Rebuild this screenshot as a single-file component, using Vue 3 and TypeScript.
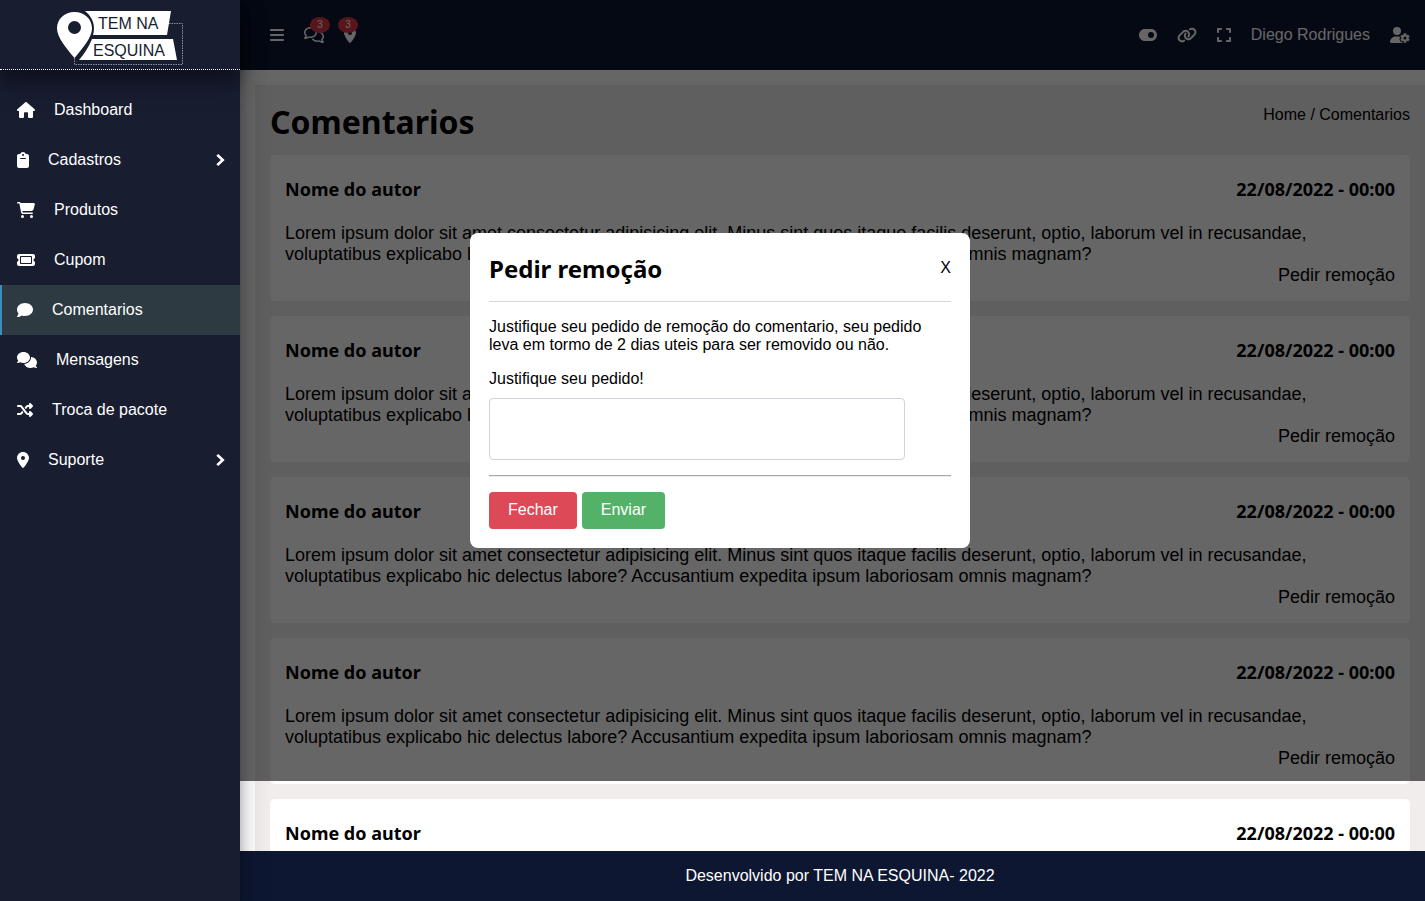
<script setup lang="ts">
import { ref } from 'vue'

interface Glyph {
  w: number
  d: string
}

interface MenuItem {
  label: string
  icon: string
  active?: boolean
  expandable?: boolean
}

const glyphs: Record<string, Glyph> = {
  home: { w: 576, d: 'M575.8 255.5c0 18-15 32.1-32 32.1h-32l.7 160.2c0 2.7-.2 5.4-.5 8.1V472c0 22.1-17.9 40-40 40H392c-22.100 0-40-17.900-40-40V360c0-17.700-14.300-32-32-32h-64c-17.700 0-32 14.300-32 32v112c0 22.100-17.900 40-40 40h-80c-22.100 0-40-17.900-40-40V287.600H32c-18 0-32-14-32-32.100 0-9 3-17 10-24L266.400 8c7-7 15-8 22-8s15 2 21 7l255.400 224.500c8 7 12 15 11 24z' },
  clipboard: { w: 384, d: 'M192 0c-41.800 0-77.400 26.700-90.500 64H64C28.700 64 0 92.700 0 128v320c0 35.300 28.700 64 64 64h256c35.300 0 64-28.700 64-64V128c0-35.300-28.700-64-64-64h-37.500C269.400 26.700 233.800 0 192 0zm0 64a32 32 0 1 1 0 64 32 32 0 1 1 0-64zM112 192h160c8.800 0 16 7.200 16 16s-7.200 16-16 16H112c-8.800 0-16-7.200-16-16s7.200-16 16-16z' },
  cart: { w: 576, d: 'M0 24C0 10.700 10.700 0 24 0h45.500c22 0 41.500 12.800 50.600 32h411c26.300 0 45.500 25 38.600 50.400l-41 152.300c-8.500 31.400-37 53.300-69.500 53.300H170.700l5.400 28.500c2.200 11.300 12.100 19.500 23.600 19.500H488c13.300 0 24 10.700 24 24s-10.700 24-24 24H199.700c-34.600 0-64.300-24.600-70.700-58.500L77.400 54.500c-.7-3.800-4-6.500-7.900-6.500H24C10.700 48 0 37.300 0 24zm128 440a48 48 0 1 1 96 0 48 48 0 1 1-96 0zm336-48a48 48 0 1 1 0 96 48 48 0 1 1 0-96z' },
  ticket: { w: 576, d: 'M64 64C28.700 64 0 92.700 0 128v64c0 8.800 7.400 15.700 15.700 18.600C34.500 217.100 48 235 48 256s-13.500 38.900-32.300 45.400C7.400 304.300 0 311.200 0 320v64c0 35.300 28.700 64 64 64h448c35.300 0 64-28.700 64-64v-64c0-8.800-7.400-15.700-15.700-18.600C541.500 294.900 528 277 528 256s13.500-38.900 32.300-45.400c8.300-2.900 15.700-9.800 15.700-18.600v-64c0-35.300-28.700-64-64-64H64zm64 112v160c0 8.800 7.200 16 16 16h288c8.800 0 16-7.200 16-16V176c0-8.800-7.200-16-16-16H144c-8.800 0-16 7.200-16 16zM96 160c0-17.700 14.300-32 32-32h320c17.700 0 32 14.300 32 32v192c0 17.700-14.300 32-32 32H128c-17.700 0-32-14.300-32-32V160z' },
  comment: { w: 512, d: 'M512 240c0 114.900-114.600 208-256 208-37.100 0-72.300-6.400-104.100-17.900-11.900 8.700-31.300 20.600-54.300 30.600C73.600 471.100 44.700 480 16 480c-6.500 0-12.300-3.900-14.800-9.900s-1.100-12.800 3.400-17.400l.3-.3c.3-.3.7-.7 1.300-1.400 1.100-1.200 2.800-3.100 4.900-5.700 4.100-5 9.600-12.400 15.200-21.600 10-16.600 19.500-38.400 21.400-62.900C17.700 326.800 0 285.100 0 240 0 125.100 114.600 32 256 32s256 93.100 256 208z' },
  comments: { w: 640, d: 'M208 352c114.900 0 208-78.800 208-176S322.900 0 208 0 0 78.800 0 176c0 38.600 14.700 74.300 39.600 103.400-3.500 9.400-8.700 17.700-14.200 24.700-4.800 6.200-9.700 11-13.300 14.300-1.800 1.600-3.300 2.900-4.300 3.700-.5.400-.9.700-1.100.8l-.2.200C1 327.200-1.400 334.400.8 340.900S9.100 352 16 352c21.800 0 43.800-5.600 62.100-12.500 9.200-3.500 17.800-7.400 25.200-11.400C134.100 343.300 169.800 352 208 352zM448 176c0 112.300-99.100 196.900-216.500 207C255.800 457.400 336.400 512 432 512c38.200 0 73.900-8.700 104.700-23.900 7.500 4 16 7.900 25.200 11.400 18.300 6.900 40.300 12.500 62.100 12.500 6.900 0 13.100-4.500 15.200-11.100 2.100-6.600-.2-13.800-5.800-17.900l-.2-.2c-.2-.2-.6-.4-1.100-.8-1-.8-2.500-2-4.300-3.700-3.600-3.300-8.500-8.100-13.300-14.300-5.500-7-10.700-15.400-14.200-24.700 24.900-29 39.600-64.700 39.600-103.400 0-92.800-84.900-168.900-192.600-175.500.4 5.100.6 10.300.6 15.500z' },
  shuffle: { w: 512, d: 'M403.800 34.400c12-5 25.700-2.200 34.900 6.900l64 64c6 6 9.400 14.100 9.400 22.600s-3.400 16.600-9.400 22.600l-64 64c-9.200 9.200-22.900 11.900-34.900 6.900S384 204.900 384 192v-32h-32c-10.100 0-19.600 4.700-25.600 12.800L284 229.300 244 176l31.200-41.600C293.300 110.200 321.800 96 352 96h32V64c0-12.900 7.800-24.600 19.800-29.600zM164 282.700l40 53.300-31.200 41.600C154.700 401.800 126.200 416 96 416H32c-17.700 0-32-14.300-32-32s14.300-32 32-32h64c10.100 0 19.600-4.700 25.600-12.800L164 282.700zm274.600 188c-9.200 9.200-22.900 11.900-34.900 6.900S384 460.900 384 448v-32h-32c-30.200 0-58.700-14.200-76.800-38.400L121.600 172.800c-6-8.100-15.500-12.800-25.600-12.800H32c-17.700 0-32-14.300-32-32s14.300-32 32-32h64c30.200 0 58.700 14.200 76.800 38.400l153.600 204.800c6 8.100 15.500 12.800 25.600 12.800h32v-32c0-12.900 7.800-24.600 19.800-29.600s25.700-2.200 34.900 6.900l64 64c6 6 9.400 14.100 9.400 22.600s-3.400 16.600-9.400 22.600l-64 64z' },
  pin: { w: 384, d: 'M215.700 499.200C267 435 384 279.400 384 192 384 86 298 0 192 0S0 86 0 192c0 87.400 117 243 168.300 307.200 12.300 15.300 35.100 15.300 47.400 0zM192 128a64 64 0 1 1 0 128 64 64 0 1 1 0-128z' },
  chevron: { w: 320, d: 'M104 64L310 256L104 448L42 390L186 256L42 122Z' },
  bars: { w: 448, d: 'M0 96c0-17.700 14.300-32 32-32h384c17.700 0 32 14.300 32 32s-14.300 32-32 32H32C14.300 128 0 113.700 0 96zm0 160c0-17.700 14.300-32 32-32h384c17.700 0 32 14.300 32 32s-14.300 32-32 32H32c-17.700 0-32-14.300-32-32zm448 160c0 17.700-14.300 32-32 32H32c-17.700 0-32-14.300-32-32s14.300-32 32-32h384c17.700 0 32 14.300 32 32z' },
  chats: { w: 640, d: 'M88.200 309.100c9.800-18.300 6.800-40.800-7.500-55.800C59.400 230.900 48 204 48 176c0-63.500 63.800-128 160-128s160 64.500 160 128-63.800 128-160 128c-13.100 0-25.800-1.300-37.800-3.600-10.400-2-21.200-.6-30.700 4.200-4.100 2.100-8.300 4.100-12.600 6-16 7.200-32.900 13.500-49.900 18 2.800-4.600 5.400-9.100 7.900-13.600l3.300-5.900zM0 176c0 41.800 17.200 80.100 45.900 110.300-.9 1.700-1.900 3.500-2.800 5.100-10.300 18.400-22.300 36.500-36.600 52.100-6.600 7-8.300 17.200-4.600 25.900C5.800 378.300 14.400 384 24 384c43 0 86.500-13.300 122.700-29.700 4.800-2.200 9.600-4.500 14.200-6.800 15.100 3 30.900 4.500 47.100 4.500 114.900 0 208-78.800 208-176S322.900 0 208 0 0 78.800 0 176zm432 304c16.200 0 31.900-1.600 47.100-4.500 4.600 2.300 9.400 4.600 14.200 6.800C529.500 498.700 573 512 616 512c9.600 0 18.200-5.700 22-14.500 3.800-8.800 2-19-4.600-25.900-14.200-15.600-26.200-33.700-36.600-52.100-.9-1.700-1.900-3.400-2.800-5.100C622.800 384.100 640 345.800 640 304c0-94.400-87.900-171.500-198.200-175.800 4.100 15.200 6.200 31.200 6.200 47.800v.6c87.200 6.700 144 67.500 144 127.400 0 28-11.400 54.900-32.700 77.200-14.300 15-17.300 37.600-7.500 55.800 1.100 2 2.200 4 3.300 5.900 2.500 4.500 5.200 9 7.900 13.600-17-4.500-33.900-10.700-49.900-18-4.300-1.900-8.500-3.900-12.600-6-9.500-4.800-20.300-6.200-30.700-4.200-12.100 2.400-24.700 3.600-37.800 3.600-61.700 0-110-26.500-136.800-62.300-16 5.400-32.800 9.400-50 11.800C279 439.800 350 480 432 480z' },
  toggle: { w: 576, d: 'M192 64C86 64 0 150 0 256s86 192 192 192h192c106 0 192-86 192-192S490 64 384 64H192zm192 96a96 96 0 1 1 0 192 96 96 0 1 1 0-192z' },
  link: { w: 640, d: 'M579.800 267.700c56.500-56.500 56.500-148 0-204.500-50-50-128.800-56.500-186.300-15.400l-1.600 1.100c-14.400 10.300-17.700 30.300-7.400 44.600s30.300 17.700 44.600 7.400l1.600-1.100c32.100-22.900 76-19.300 103.800 8.600 31.500 31.500 31.500 82.500 0 114L422.300 334.800c-31.500 31.500-82.500 31.500-114 0-27.900-27.900-31.500-71.800-8.600-103.800l1.100-1.600c10.300-14.400 6.900-34.400-7.400-44.600s-34.400-6.900-44.600 7.400l-1.100 1.600C206.500 251.200 213 330 263 380c56.500 56.500 148 56.500 204.500 0L579.800 267.700zM60.200 244.300c-56.500 56.500-56.500 148 0 204.500 50 50 128.800 56.500 186.300 15.400l1.600-1.100c14.400-10.300 17.700-30.300 7.400-44.600s-30.300-17.700-44.600-7.400l-1.600 1.100c-32.100 22.900-76 19.300-103.800-8.600C74 372 74 321 105.500 289.500l112.200-112.300c31.500-31.500 82.500-31.500 114 0 27.900 27.900 31.500 71.800 8.600 103.900l-1.100 1.600c-10.300 14.400-6.900 34.400 7.400 44.600s34.400 6.900 44.600-7.400l1.100-1.600C433.500 260.800 427 182 377 132c-56.500-56.500-148-56.500-204.500 0L60.200 244.300z' },
  expand: { w: 448, d: 'M32 32C14.300 32 0 46.300 0 64v96c0 17.700 14.300 32 32 32s32-14.300 32-32V96h64c17.700 0 32-14.300 32-32s-14.300-32-32-32H32zM64 352c0-17.700-14.300-32-32-32s-32 14.300-32 32v96c0 17.700 14.300 32 32 32h96c17.700 0 32-14.300 32-32s-14.300-32-32-32H64v-64zM320 32c-17.700 0-32 14.300-32 32s14.300 32 32 32h64v64c0 17.700 14.300 32 32 32s32-14.300 32-32V64c0-17.700-14.300-32-32-32h-96zM448 352c0-17.700-14.300-32-32-32s-32 14.300-32 32v64h-64c-17.700 0-32 14.300-32 32s14.300 32 32 32h96c17.700 0 32-14.300 32-32v-96z' },
  userGear: { w: 640, d: 'M224 0a128 128 0 1 1 0 256 128 128 0 1 1 0-256zM178.300 304h91.400c11.800 0 23.400 1.200 34.500 3.300-2.100 18.500 7.400 35.600 21.800 44.800-16.600 10.600-26.700 31.600-20 53.300 4 12.900 9.400 25.500 16.400 37.600s15.200 23.100 24.400 33c15.700 16.900 39.600 18.400 57.200 8.700v.9c0 9.200 2.700 18.500 7.900 26.300H29.700C13.300 512 0 498.700 0 482.300 0 383.800 79.800 304 178.300 304zM436 218.200c0-7 4.500-13.300 11.300-14.800 10.500-2.400 21.500-3.700 32.700-3.700s22.200 1.300 32.700 3.700c6.800 1.500 11.300 7.800 11.300 14.800v30.600c7.900 3.400 15.400 7.700 22.300 12.800l24.900-14.300c6.100-3.500 13.700-2.700 18.500 2.400 7.600 8.100 14.300 17.200 20.100 27.200s10.300 20.400 13.500 31c2.100 6.700-1.100 13.700-7.200 17.200l-25 14.400c.4 4 .7 8.100.7 12.300s-.2 8.200-.7 12.300l25 14.400c6.100 3.500 9.200 10.500 7.200 17.200-3.300 10.600-7.800 21-13.500 31s-12.500 19.100-20.100 27.200c-4.800 5.100-12.500 5.900-18.500 2.400l-24.900-14.300c-6.900 5.100-14.300 9.400-22.300 12.800v30.600c0 7-4.500 13.300-11.300 14.800-10.500 2.400-21.500 3.700-32.700 3.700s-22.200-1.300-32.700-3.700c-6.800-1.500-11.300-7.800-11.300-14.800v-30.500c-8-3.400-15.600-7.700-22.500-12.900l-24.700 14.300c-6.100 3.500-13.700 2.700-18.500-2.400-7.600-8.100-14.300-17.200-20.100-27.200s-10.300-20.400-13.500-31c-2.100-6.700 1.100-13.700 7.200-17.200l24.800-14.300c-.4-4.100-.7-8.200-.7-12.400s.2-8.300.7-12.400l-24.800-14.300c-6.100-3.500-9.200-10.500-7.200-17.200 3.300-10.600 7.700-21 13.500-31s12.500-19.100 20.100-27.200c4.800-5.100 12.400-5.900 18.500-2.400l24.800 14.300c6.900-5.100 14.500-9.400 22.500-12.900v-30.500zM480 303.800a48 48 0 1 0 0 96 48 48 0 1 0 0-96z' },
}

const menu: MenuItem[] = [
  { label: 'Dashboard', icon: 'home' },
  { label: 'Cadastros', icon: 'clipboard', expandable: true },
  { label: 'Produtos', icon: 'cart' },
  { label: 'Cupom', icon: 'ticket' },
  { label: 'Comentarios', icon: 'comment', active: true },
  { label: 'Mensagens', icon: 'comments' },
  { label: 'Troca de pacote', icon: 'shuffle' },
  { label: 'Suporte', icon: 'pin', expandable: true },
]

const lorem =
  'Lorem ipsum dolor sit amet consectetur adipisicing elit. Minus sint quos itaque facilis deserunt, optio, laborum vel in recusandae, voluptatibus explicabo hic delectus labore? Accusantium expedita ipsum laboriosam omnis magnam?'

const comments = Array.from({ length: 5 }, (_, id) => ({
  id,
  author: 'Nome do autor',
  date: '22/08/2022 - 00:00',
  text: lorem,
}))

const modalOpen = ref(true)
const reason = ref('')

const box = (name: string): string => `0 0 ${glyphs[name].w} 512`
</script>

<template>
  <div class="layout">
    <aside class="sidebar">
      <a class="brand" href="#" aria-label="Tem na Esquina">
        <svg class="logo" viewBox="0 0 126 56" aria-hidden="true">
          <path d="M112 14.500H125.500V55.500H17.500V46" fill="none" stroke="#8d92a3" stroke-dasharray="1.500 1" />
          <path d="M28 2H114L110 26H36Q40 12 28 2Z" fill="#fff" />
          <path d="M35 30H116L120 51H22Q30 42 35 30Z" fill="#fff" />
          <path fill-rule="evenodd" d="M17.500 3C27.500 3 35 10 35 19.500C35 28 26 39 17.500 49C9 39 0 28 0 19.500C0 10 7.500 3 17.500 3ZM17.500 12A6.500 6.500 0 1 0 17.500 25A6.500 6.500 0 1 0 17.500 12Z" fill="#fff" />
          <text x="41" y="20" class="logo-text">TEM NA</text>
          <text x="36" y="47" class="logo-text">ESQUINA</text>
        </svg>
      </a>
      <nav class="menu">
        <a v-for="item in menu" :key="item.label" href="#" class="menu-item" :class="{ active: item.active }">
          <svg class="icon" :viewBox="box(item.icon)" aria-hidden="true"><path fill-rule="evenodd" :d="glyphs[item.icon].d" /></svg>
          <span class="menu-label">{{ item.label }}</span>
          <svg v-if="item.expandable" class="icon" :viewBox="box('chevron')" aria-hidden="true"><path :d="glyphs.chevron.d" /></svg>
        </a>
      </nav>
    </aside>

    <div class="page">
      <header class="topbar">
        <div class="tools">
          <button type="button" class="tool" aria-label="Menu">
            <svg class="icon" :viewBox="box('bars')"><path :d="glyphs.bars.d" /></svg>
          </button>
          <button type="button" class="tool" aria-label="Mensagens">
            <svg class="icon" :viewBox="box('chats')"><path :d="glyphs.chats.d" /></svg>
            <span class="badge">3</span>
          </button>
          <button type="button" class="tool" aria-label="Suporte">
            <svg class="icon" :viewBox="box('pin')"><path fill-rule="evenodd" :d="glyphs.pin.d" /></svg>
            <span class="badge">3</span>
          </button>
        </div>
        <div class="tools">
          <button type="button" class="tool" aria-label="Alternar tema">
            <svg class="icon" :viewBox="box('toggle')"><path fill-rule="evenodd" :d="glyphs.toggle.d" /></svg>
          </button>
          <button type="button" class="tool" aria-label="Link">
            <svg class="icon" :viewBox="box('link')"><path :d="glyphs.link.d" /></svg>
          </button>
          <button type="button" class="tool" aria-label="Tela cheia">
            <svg class="icon" :viewBox="box('expand')"><path :d="glyphs.expand.d" /></svg>
          </button>
          <span>Diego Rodrigues</span>
          <button type="button" class="tool" aria-label="Conta">
            <svg class="icon" :viewBox="box('userGear')"><path fill-rule="evenodd" :d="glyphs.userGear.d" /></svg>
          </button>
        </div>
      </header>

      <main class="scroller">
        <div class="content">
          <div class="heading">
            <h1>Comentarios</h1>
            <div class="crumbs"><a href="#">Home</a> / <a href="#">Comentarios</a></div>
          </div>
          <article v-for="c in comments" :key="c.id" class="card">
            <div class="card-head">
              <h3>{{ c.author }}</h3>
              <h3>{{ c.date }}</h3>
            </div>
            <p>{{ c.text }}</p>
            <button type="button" class="remove" @click="modalOpen = true">Pedir remoção</button>
          </article>
        </div>
      </main>

      <footer class="footer">Desenvolvido por TEM NA ESQUINA- 2022</footer>
    </div>

    <div v-if="modalOpen" class="overlay">
      <form class="modal" role="dialog" aria-labelledby="modal-title" @submit.prevent="modalOpen = false">
        <div class="modal-head">
          <h2 id="modal-title">Pedir remoção</h2>
          <button type="button" class="close" @click="modalOpen = false">X</button>
        </div>
        <p class="modal-text">
          Justifique seu pedido de remoção do comentario, seu pedido leva em tormo de 2 dias uteis para ser removido ou não.
        </p>
        <label for="reason">Justifique seu pedido!</label>
        <textarea id="reason" v-model="reason"></textarea>
        <hr />
        <div class="actions">
          <button type="button" class="btn danger" @click="modalOpen = false">Fechar</button>
          <button type="submit" class="btn success">Enviar</button>
        </div>
      </form>
    </div>
  </div>
</template>

<style>
body {
  margin: 0;
  background: #fff;
}
</style>

<style scoped>
* {
  box-sizing: border-box;
}

.layout {
  position: relative;
  display: grid;
  grid-template-columns: 240px minmax(0, 1fr);
  height: 100vh;
  overflow: hidden;
  font: 16px/18px "Liberation Sans", Arial, sans-serif;
  color: #000;
}

a {
  color: inherit;
  text-decoration: none;
}

button {
  padding: 0;
  border: 0;
  background: none;
  color: inherit;
  font: inherit;
  cursor: pointer;
}

h1,
h2,
h3,
p {
  margin: 0;
}

h1,
h2,
h3 {
  font-family: "Noto Sans", "Open Sans", sans-serif;
  font-weight: 700;
}

.icon {
  display: block;
  height: 16px;
  fill: currentColor;
}

/* Sidebar */
.sidebar {
  position: relative;
  z-index: 3;
  background: #181d30;
  color: #fff;
  box-shadow: 0 14px 28px rgba(0, 0, 0, 0.25), 0 10px 10px rgba(0, 0, 0, 0.22);
}

.brand {
  display: flex;
  justify-content: center;
  height: 70px;
  padding-top: 9px;
  border-bottom: 1px dotted #fff;
  box-shadow: 0 14px 28px rgba(0, 0, 0, 0.25), 0 10px 10px rgba(0, 0, 0, 0.22);
}

.logo {
  width: 126px;
  height: 56px;
}

.logo-text {
  font-size: 16px;
  fill: #181d30;
}

.menu {
  padding-top: 15px;
}

.menu-item {
  display: flex;
  align-items: center;
  gap: 19px;
  height: 50px;
  padding: 0 15px 1px;
  border-left: 2px solid transparent;
}

.menu-item.active {
  border-color: #3c8dbc;
  background: #2d3a42;
}

.menu-label {
  flex: 1;
}

/* Main column */
.page {
  display: flex;
  flex-direction: column;
  min-width: 0;
  min-height: 0;
}

.topbar {
  display: flex;
  flex: none;
  align-items: center;
  justify-content: space-between;
  height: 70px;
  padding: 0 15px 1px 30px;
  background: #0e1731;
  color: #fff;
}

.tools {
  display: flex;
  align-items: center;
  gap: 20px;
}

.tool {
  position: relative;
}

.badge {
  position: absolute;
  top: -10px;
  left: 50%;
  width: 20px;
  margin-left: -4px;
  border-radius: 50%;
  background: #dc3545;
  font-size: 10px;
  line-height: 16px;
}

.tool:last-child .badge {
  margin-left: -12px;
}

.scroller {
  flex: 1;
  min-height: 0;
  padding: 15px 0 0 15px;
  overflow-y: auto;
  scrollbar-width: none;
}

.content {
  padding: 15px;
  background: #f1eded;
}

.heading {
  display: flex;
  align-items: flex-start;
  justify-content: space-between;
  min-height: 55px;
}

h1 {
  font-size: 32px;
  line-height: 44px;
}

.crumbs {
  padding-top: 6px;
}

.card {
  display: flex;
  flex-direction: column;
  margin-bottom: 15px;
  padding: 15px;
  border-radius: 5px;
  background: #fff;
  font-size: 18px;
  line-height: 21px;
}

.card-head {
  display: flex;
  justify-content: space-between;
  padding: 6px 0 21px;
}

h3 {
  font-size: 18px;
  line-height: 26px;
}

.remove {
  align-self: flex-end;
}

.footer {
  flex: none;
  height: 50px;
  padding-left: 15px;
  background: #0e1731;
  color: #fff;
  line-height: 50px;
  text-align: center;
}

/* Dialog */
.overlay {
  position: absolute;
  z-index: 2;
  inset: 0 0 120px;
  display: flex;
  align-items: center;
  justify-content: center;
  padding-left: 15px;
  background: rgba(0, 0, 0, 0.6);
}

.modal {
  width: 500px;
  padding: 19px;
  border-radius: 8px;
  background: #fff;
}

.modal-head {
  display: flex;
  align-items: flex-start;
  justify-content: space-between;
  margin-bottom: 16px;
  padding-bottom: 16px;
  border-bottom: 1px solid #d6d8da;
}

h2 {
  font-size: 24px;
  line-height: 33px;
}

.close {
  padding-top: 7px;
}

.modal-text {
  margin-bottom: 16px;
}

label {
  display: block;
  margin-bottom: 10px;
}

textarea {
  display: block;
  width: 90%;
  height: 62px;
  padding: 8px;
  border: 1px solid #ced4da;
  border-radius: 4px;
  font: inherit;
  resize: none;
}

hr {
  margin: 15px 0;
  border: 0;
  border-top: 1px solid #a8a8a8;
  border-bottom: 1px solid #ececec;
}

.actions {
  display: flex;
  gap: 5px;
}

.btn {
  height: 37px;
  padding: 0 19px 1px;
  border-radius: 4px;
  color: #fff;
}

.danger {
  background: #de4958;
}

.success {
  background: #54b268;
}
</style>
